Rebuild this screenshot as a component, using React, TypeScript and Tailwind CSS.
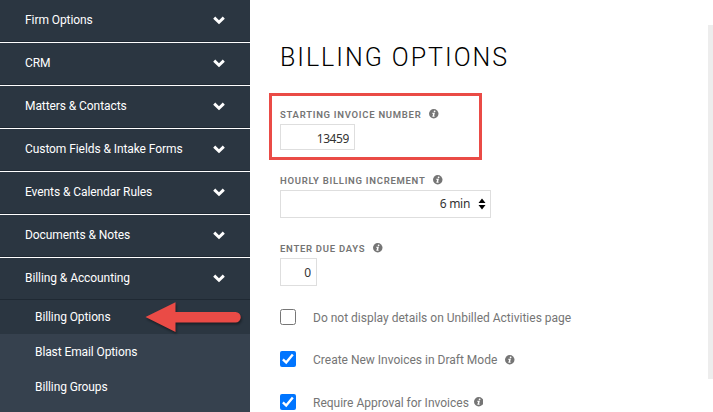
import { useState } from 'react';

const sections = [
  'Firm Options',
  'CRM',
  'Matters & Contacts',
  'Custom Fields & Intake Forms',
  'Events & Calendar Rules',
  'Documents & Notes',
];

const billingItems = ['Billing Options', 'Blast Email Options', 'Billing Groups'];

function Chevron() {
  return (
    <svg viewBox="0 0 12 9" className="w-3 h-[9px]" fill="none" stroke="white" strokeWidth="2.9">
      <path d="M1.2 1.6 L6 6.3 L10.8 1.6" />
    </svg>
  );
}

function SectionHeader({ label }: { label: string }) {
  return (
    <button
      type="button"
      className="flex w-full h-[42px] items-center justify-between border-b border-[#1f2933] bg-[#2b3641] pl-[25px] pr-[25px] text-[12px] tracking-[-0.08px] text-white"
    >
      <span className="pb-px">{label}</span>
      <Chevron />
    </button>
  );
}

function Info({ className }: { className: string }) {
  return (
    <svg viewBox="0 0 18 18" className={`w-[9.5px] h-[9.5px] ${className}`}>
      <circle cx="9" cy="9" r="9" fill="#757575" />
      <circle cx="10.6" cy="4.4" r="1.7" fill="white" />
      <path d="M6.4 7 H11.2 L9.6 13 H11 L10.4 14.8 H6.2 L7.8 8.8 H6 Z" fill="white" />
    </svg>
  );
}

function FieldLabel({ label }: { label: string }) {
  return (
    <div className="flex h-[14px] items-center text-[9.5px] leading-[14px] font-semibold text-[#757575]">
      <span className="pt-px tracking-[0.72px]">{label}</span>
      <Info className="ml-2" />
    </div>
  );
}

interface CheckRowProps {
  label: string;
  defaultChecked?: boolean;
  info?: string;
}

function CheckRow({ label, defaultChecked = false, info }: CheckRowProps) {
  const [checked, setChecked] = useState(defaultChecked);

  return (
    <div className="flex h-4 items-center">
      <button
        type="button"
        role="checkbox"
        aria-checked={checked}
        aria-label={label}
        onClick={() => setChecked(!checked)}
        className={
          checked
            ? 'w-4 h-4 rounded-[2px] bg-[#0075ff]'
            : 'w-4 h-4 rounded-[2.5px] border border-[#767676] bg-white'
        }
      >
        {checked && (
          <svg viewBox="0 0 16 16" className="w-4 h-4" fill="none" stroke="white" strokeWidth="2.4">
            <path d="M2.9 8.4 L6.2 11.6 L12.8 3.5" />
          </svg>
        )}
      </button>
      <span className="ml-[17px] pt-px text-[12px] leading-4 text-[#757575]">{label}</span>
      {info && <Info className={info} />}
    </div>
  );
}

export default function App() {
  return (
    <div className="relative flex w-[713px] h-[412px] overflow-hidden bg-white font-[Roboto,sans-serif]">
      {/* Sidebar */}
      <nav className="w-[250px] shrink-0 bg-[#36414e]">
        {sections.map((label) => (
          <div key={label} className="border-b border-white">
            <SectionHeader label={label} />
          </div>
        ))}
        <SectionHeader label="Billing & Accounting" />
        {billingItems.map((label, i) => (
          <div
            key={label}
            className={`flex items-center pl-[35px] text-[12px] tracking-[-0.1px] text-white ${
              i === 0 ? 'h-[34px] bg-[#2b3641]' : 'h-[35px]'
            }`}
          >
            {label}
          </div>
        ))}
      </nav>

      {/* Billing form */}
      <main className="flex-1 pl-[30px] pt-[43px]">
        <h1 className="h-[30px] text-[25px] leading-[30px] font-light tracking-[1.98px] text-black">BILLING OPTIONS</h1>

        <div className="mt-[34px]">
          <FieldLabel label="STARTING INVOICE NUMBER" />
          <input
            defaultValue="13459"
            className="mt-[3px] block w-[75px] h-[26px] border border-[#dedede] pr-[5px] pt-[3px] text-right font-['Noto_Sans',sans-serif] text-[12px] tracking-[-0.4px] text-[#333] outline-none"
          />
        </div>

        <div className="mt-[23px]">
          <FieldLabel label="HOURLY BILLING INCREMENT" />
          <div className="mt-[3px] flex w-[211px] h-7 items-center justify-end border border-[#dedede] pr-1 font-['Noto_Sans',sans-serif] text-[12px] tracking-[-0.3px] text-[#333]">
            <span>6 min</span>
            <svg viewBox="0 0 8 12" className="ml-2 w-2 h-3" fill="black">
              <path d="M4 0.5 L7.5 5 H0.5 Z M0.5 7 H7.5 L4 11.5 Z" />
            </svg>
          </div>
        </div>

        <div className="mt-[23px]">
          <FieldLabel label="ENTER DUE DAYS" />
          <input
            defaultValue="0"
            className="mt-[3px] block w-[37px] h-7 border border-[#dedede] pr-[5px] text-right font-['Noto_Sans',sans-serif] text-[12px] text-[#333] outline-none"
          />
        </div>

        <div className="mt-[23px] flex flex-col">
          <CheckRow label="Do not display details on Unbilled Activities page" />
          <div className="mt-[26px]">
            <CheckRow label="Create New Invoices in Draft Mode" defaultChecked info="ml-2 mt-[2px]" />
          </div>
          <div className="mt-[27px]">
            <CheckRow label="Require Approval for Invoices" defaultChecked info="ml-[5px]" />
          </div>
        </div>
      </main>

      <div className="mt-[25px] w-[5px] h-[354px] bg-[#ededed]" />

      {/* Callouts drawn over the page */}
      <div className="pointer-events-none absolute left-[269px] top-[93px] w-[213px] h-[67px] border-3 border-[#ea4b46]" />
      <svg
        viewBox="0 0 100 36"
        className="pointer-events-none absolute left-[143px] top-[299px] w-[100px] h-9 drop-shadow-[1px_2px_1px_rgba(0,0,0,0.4)]"
        fill="#ea4b46"
      >
        <path d="M2.5 18 L32.5 3.3 V13 H92.5 A5 5 0 0 1 92.5 23.5 H32.5 V33 Z" />
      </svg>
    </div>
  );
}
